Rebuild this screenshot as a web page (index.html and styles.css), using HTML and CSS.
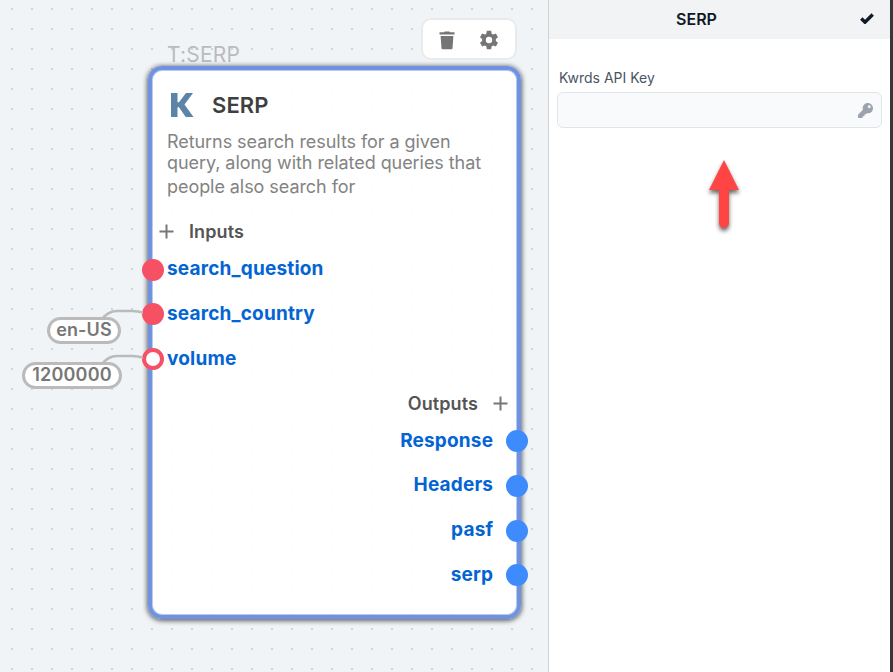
FILE: index.html
```html
<!DOCTYPE html>
<html lang="en">
<head>
<meta charset="utf-8">
<title>SERP</title>
<link rel="stylesheet" href="styles.css">
</head>
<body>
<main class="app">
  <section class="canvas">
    <div class="node-tag">T:SERP</div>
    <div class="toolbar">
      <svg class="trash" width="16" height="19" viewBox="0 0 16 19"><path d="M5 1.2 5.7.4h4.6l.7.8h4.500v2.300H.5V1.200zM1.600 5h12.800l-.9 12.300q-.1 1-1.100 1H3.600q-1 0-1.100-1z"/></svg>
      <svg class="gear" width="22" height="22" viewBox="0 0 24 24"><path d="M19.43 12.98c.04-.32.07-.64.07-.98s-.03-.66-.07-.98l2.11-1.65c.19-.15.24-.42.12-.64l-2-3.46c-.12-.22-.39-.3-.61-.22l-2.49 1c-.52-.4-1.08-.73-1.69-.98l-.38-2.65C14.46 2.18 14.25 2 14 2h-4c-.25 0-.46.18-.49.42l-.38 2.65c-.61.25-1.17.59-1.69.98l-2.49-1c-.23-.09-.49 0-.61.22l-2 3.46c-.13.22-.07.49.12.64l2.11 1.65c-.04.32-.07.65-.07.98s.03.66.07.98l-2.11 1.65c-.19.15-.24.42-.12.64l2 3.46c.12.22.39.3.61.22l2.49-1c.52.4 1.08.73 1.69.98l.38 2.65c.03.24.24.42.49.42h4c.25 0 .46-.18.49-.42l.38-2.65c.61-.25 1.17-.59 1.69-.98l2.49 1c.23.09.49 0 .61-.22l2-3.46c.12-.22.07-.49-.12-.64zM12 15.5A3.5 3.5 0 1 1 12 8.500a3.500 3.500 0 0 1 0 7z"/></svg>
    </div>

    <article class="node">
      <header class="node-head">
        <svg class="brand" width="23" height="24" viewBox="0 0 23 24"><path d="M0 0h6.500v9.200h1.500L15 0h7L13.500 11.500 22.500 24h-7.800L8 14.300H6.500V24H0z"/></svg>
        <h1 class="title">SERP</h1>
      </header>
      <p class="desc">
        <span class="line">Returns search results for a given</span>
        <span class="line">query, along with related queries that</span>
        <span class="line last">people also search for</span>
      </p>
      <div class="band">
        <svg class="plus" width="15" height="15" viewBox="0 0 15 15"><path d="M7.500 .5v14M.5 7.500h14"/></svg>
        <span>Inputs</span>
      </div>
      <ul class="ports inputs">
        <li class="port"><i class="dot"></i><span>search_question</span></li>
        <li class="port"><i class="dot"></i><span>search_country</span></li>
        <li class="port"><i class="dot hollow"></i><span>volume</span></li>
      </ul>
      <div class="band band-out">
        <span>Outputs</span>
        <svg class="plus" width="15" height="15" viewBox="0 0 15 15"><path d="M7.500 .5v14M.5 7.500h14"/></svg>
      </div>
      <ul class="ports outputs">
        <li class="port"><span>Response</span><i class="dot"></i></li>
        <li class="port"><span>Headers</span><i class="dot"></i></li>
        <li class="port"><span>pasf</span><i class="dot"></i></li>
        <li class="port"><span>serp</span><i class="dot"></i></li>
      </ul>
    </article>

    <svg class="wires" width="143" height="90" viewBox="0 300 143 90"><path d="M101 320q7-9 16-9h15q7 0 12 2M101 365q7-9 16-9h15q7 0 12 2"/></svg>
    <div class="value value-country"><span>en-US</span></div>
    <div class="value value-volume"><span>1200000</span></div>
  </section>

  <aside class="panel">
    <header class="panel-head">
      <h2 class="panel-title">SERP</h2>
      <svg class="check" width="14" height="11" viewBox="0 0 14 11"><path d="M1.300 5.500 5 9.200 12.700 1.500"/></svg>
    </header>
    <div class="field">
      <label class="label" for="key"><span>Kwrds API Key</span></label>
      <div class="control">
        <input id="key" type="text">
        <svg width="15" height="15" viewBox="0 0 512 512"><path d="M512 176c0 97-79 176-176 176-11 0-22-1-33-3l-24 27a24 24 0 0 1-18 8h-37v40a24 24 0 0 1-24 24h-40v40a24 24 0 0 1-24 24H24a24 24 0 0 1-24-24v-78a24 24 0 0 1 7-17l162-162a176 176 0 1 1 343-55zM336 128a48 48 0 1 0 96 0 48 48 0 0 0-96 0z"/></svg>
      </div>
    </div>
    <svg class="arrow" width="50" height="90" viewBox="0 0 50 90"><path d="M25 10 40 40H30V73a5 5 0 0 1-10 0V40H10z"/></svg>
  </aside>
  <div class="edge"></div>
</main>
</body>
</html>
```
FILE: styles.css
```css
* { box-sizing: border-box; }
body {
  margin: 0;
  font-family: Inter, "Liberation Sans", sans-serif;
}
h1, h2, p, ul { margin: 0; padding: 0; }
ul { list-style: none; }
svg { display: block; flex: none; }

.app {
  display: flex;
  width: 893px;
  height: 672px;
  overflow: hidden;
}

/* Canvas */
.canvas {
  position: relative;
  width: 548px;
  flex: none;
  background: #f0f4f7 conic-gradient(from 270deg at 2px 2px, #cbd5e0 90deg, transparent 0) 11px 8px / 20px 20px;
}
.node-tag {
  position: absolute;
  left: 167px;
  top: 42px;
  font-size: 21px;
  line-height: 26px;
  letter-spacing: .2px;
  color: #bbb;
}
.toolbar {
  position: absolute;
  left: 421px;
  top: 18px;
  width: 96px;
  height: 42px;
  display: flex;
  align-items: center;
  padding: 2px 0 0 16px;
  gap: 23px;
  background: #fff;
  border: 2px solid #e9eaec;
  border-radius: 10px;
}
.toolbar svg { fill: #757575; }

.node {
  position: absolute;
  left: 148px;
  top: 66px;
  width: 373px;
  height: 553px;
  border: 4px solid #6f92e1;
  border-radius: 14px;
  background: rgba(255, 255, 254, .93) padding-box;
  box-shadow: 0 1px 5px 1px rgba(0, 0, 0, .6), inset 0 0 0 1px #b9caf2;
}
.node-head {
  display: flex;
  align-items: center;
  height: 35px;
  margin: 17px 0 0 19px;
  gap: 17px;
}
.brand { fill: #5b84a8; }
.title {
  margin: 1px 0 0 1px;
  font-size: 22px;
  font-weight: 600;
  line-height: 28px;
  letter-spacing: .1px;
  color: #3f3f3f;
}
.desc {
  margin: 9px 0 0 15px;
  height: 81px;
  font-size: 18px;
  letter-spacing: -.06px;
  color: #838383;
  white-space: nowrap;
}
.line {
  display: block;
  width: max-content;
  line-height: 21px;
}
.last { line-height: 28px; }
.band {
  display: flex;
  align-items: center;
  height: 38px;
  margin: 0 1px;
  padding: 1px 6px 0;
  gap: 15px;
  background: #fff;
  font-size: 18px;
  font-weight: 600;
  letter-spacing: .1px;
  color: #555;
}
.band-out {
  justify-content: flex-end;
  margin-top: 2px;
  padding: 1px 8px 0 0;
}
.plus { stroke: #777; stroke-width: 2; fill: none; }
.port {
  display: flex;
  align-items: center;
  height: 44.8px;
  font-size: 19px;
  font-weight: 700;
  letter-spacing: .18px;
  color: #0364d3;
}
.port span { position: relative; top: -1px; }
.dot {
  width: 22px;
  height: 22px;
  border-radius: 50%;
  flex: none;
}
.inputs { margin: -2.800px 0 0 -10px; }
.inputs .port { gap: 3px; }
.inputs .dot { background: #f55064; }
.inputs .hollow { background: #fff; border: 4px solid #f55064; }
.outputs { margin: -2.900px -11px 0 0; }
.outputs .port { justify-content: flex-end; gap: 12.800px; }
.outputs .dot { background: #3d8bfd; }

.wires {
  position: absolute;
  left: 0;
  top: 300px;
  fill: none;
  stroke: #bbb;
  stroke-width: 2.5;
}
.value {
  position: absolute;
  display: flex;
  align-items: center;
  justify-content: center;
  height: 27px;
  padding-bottom: 2px;
  border: 3px solid #bbb;
  border-radius: 14px;
  background: #fff;
  font-size: 18px;
  font-weight: 600;
  color: #777;
}
.value-country { left: 47px; top: 317px; width: 74px; letter-spacing: .1px; }
.value-volume { left: 22px; top: 362px; width: 100px; letter-spacing: .2px; }

/* Settings panel */
.panel {
  position: relative;
  width: 342px;
  flex: none;
  border-left: 1px solid #d0d3d6;
  background: #fff;
}
.panel-head {
  display: grid;
  grid-template-columns: 1fr 30px;
  align-items: center;
  height: 39px;
  padding: 0 16px 2px 0;
  background: #f2f3f5;
}
.panel-title {
  font-size: 16px;
  font-weight: 600;
  line-height: 20px;
  text-align: center;
  color: #111827;
}
.check {
  justify-self: end;
  fill: none;
  stroke: #111827;
  stroke-width: 3.4;
}
.field { padding: 29px 8px 0; }
.label {
  display: block;
  height: 24px;
  padding-left: 2px;
  font-size: 14px;
  line-height: 20px;
  color: #4b5563;
}
.control {
  display: flex;
  align-items: center;
  height: 36px;
  padding-right: 8px;
  border: 1px solid #e1e4e9;
  border-radius: 6px;
  background: #f9fafc;
}
.control input {
  flex: 1;
  min-width: 0;
  border: 0;
  background: none;
  outline: 0;
}
.control svg { fill: #9ca3af; }
.arrow {
  position: absolute;
  left: 150px;
  top: 150px;
  fill: #ff4444;
  filter: drop-shadow(0 3px 2px rgba(0, 0, 0, .6));
}
.edge { flex: 1; background: #383838; }
```
